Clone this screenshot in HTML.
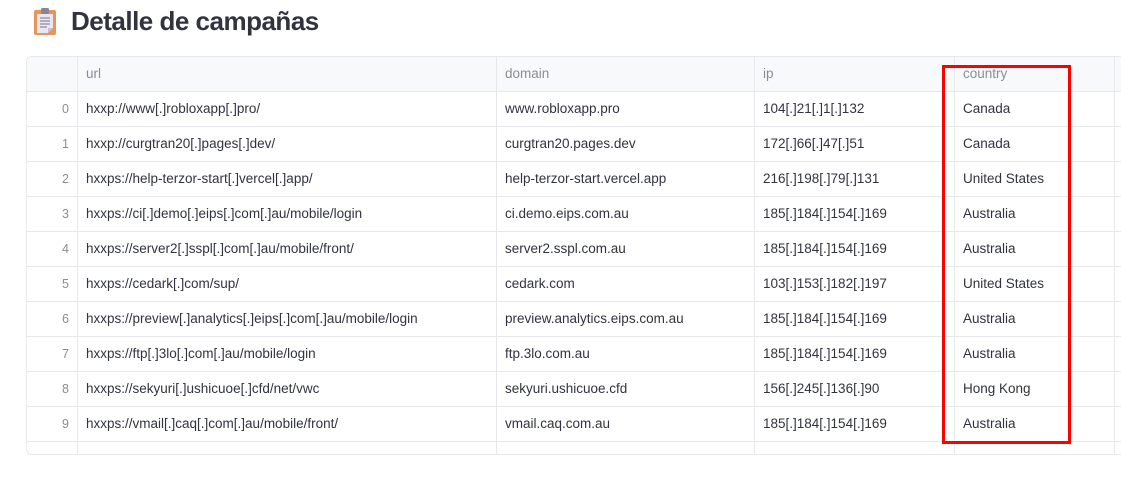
<!DOCTYPE html>
<html><head><meta charset="utf-8"><style>
*{margin:0;padding:0;box-sizing:border-box}
body{width:1121px;height:482px;background:#fff;font-family:"Liberation Sans",sans-serif;position:relative;overflow:hidden;color:#31333f}
h1{position:absolute;left:71px;top:6px;font-size:26px;font-weight:bold;color:#31333f;letter-spacing:-0.5px}
.tbl{position:absolute;left:26px;top:56px;width:1110px;height:399px;border:1px solid #e6e8ec;border-radius:6px;overflow:hidden}
.row{position:absolute;left:0;height:35px;width:100%;border-bottom:1px solid #e6e8ec;font-size:13.5px;color:#31333f}
.row.h{background:#f8f9fb;color:#8a8d98}
.c{position:absolute;top:0;height:35px;line-height:34px;border-right:1px solid #e6e8ec;padding-left:8px;white-space:nowrap;overflow:hidden}
.i{left:0;width:51px;text-align:right;padding-right:8px;padding-left:0;color:#8a8d98;font-size:12.5px}
.u{left:51px;width:419px}.d{left:470px;width:258px}.p{left:728px;width:200px}.k{left:928px;width:160px}
.red{position:absolute;left:942px;top:65px;width:129px;height:379px;border:3px solid #ff0000}
</style></head><body>
<svg style="position:absolute;left:33px;top:7px" width="24" height="29" viewBox="0 0 24 29">
<rect x="1" y="3" width="22" height="25" rx="2" fill="#e8955a"/>
<path d="M4 7h16v14l-5 5H4z" fill="#ece6f2"/>
<path d="M15 26l5-5h-5z" fill="#c9c0d4"/>
<rect x="8" y="1" width="8" height="6" rx="1.5" fill="#8a8594"/>
<g stroke="#8d8a99" stroke-width="1.2"><line x1="7" y1="11" x2="17" y2="11"/><line x1="7" y1="14" x2="17" y2="14"/><line x1="7" y1="17" x2="17" y2="17"/><line x1="7" y1="20" x2="14" y2="20"/></g>
</svg>
<h1>Detalle de campañas</h1>
<div class="tbl">
<div class="row h" style="top:0"><div class="c i"></div><div class="c u">url</div><div class="c d">domain</div><div class="c p">ip</div><div class="c k">country</div></div>
<div class="row" style="top:35px"><div class="c i">0</div><div class="c u">hxxp://www[.]robloxapp[.]pro/</div><div class="c d">www.robloxapp.pro</div><div class="c p">104[.]21[.]1[.]132</div><div class="c k">Canada</div></div>
<div class="row" style="top:70px"><div class="c i">1</div><div class="c u">hxxp://curgtran20[.]pages[.]dev/</div><div class="c d">curgtran20.pages.dev</div><div class="c p">172[.]66[.]47[.]51</div><div class="c k">Canada</div></div>
<div class="row" style="top:105px"><div class="c i">2</div><div class="c u">hxxps://help-terzor-start[.]vercel[.]app/</div><div class="c d">help-terzor-start.vercel.app</div><div class="c p">216[.]198[.]79[.]131</div><div class="c k">United States</div></div>
<div class="row" style="top:140px"><div class="c i">3</div><div class="c u">hxxps://ci[.]demo[.]eips[.]com[.]au/mobile/login</div><div class="c d">ci.demo.eips.com.au</div><div class="c p">185[.]184[.]154[.]169</div><div class="c k">Australia</div></div>
<div class="row" style="top:175px"><div class="c i">4</div><div class="c u">hxxps://server2[.]sspl[.]com[.]au/mobile/front/</div><div class="c d">server2.sspl.com.au</div><div class="c p">185[.]184[.]154[.]169</div><div class="c k">Australia</div></div>
<div class="row" style="top:210px"><div class="c i">5</div><div class="c u">hxxps://cedark[.]com/sup/</div><div class="c d">cedark.com</div><div class="c p">103[.]153[.]182[.]197</div><div class="c k">United States</div></div>
<div class="row" style="top:245px"><div class="c i">6</div><div class="c u">hxxps://preview[.]analytics[.]eips[.]com[.]au/mobile/login</div><div class="c d">preview.analytics.eips.com.au</div><div class="c p">185[.]184[.]154[.]169</div><div class="c k">Australia</div></div>
<div class="row" style="top:280px"><div class="c i">7</div><div class="c u">hxxps://ftp[.]3lo[.]com[.]au/mobile/login</div><div class="c d">ftp.3lo.com.au</div><div class="c p">185[.]184[.]154[.]169</div><div class="c k">Australia</div></div>
<div class="row" style="top:315px"><div class="c i">8</div><div class="c u">hxxps://sekyuri[.]ushicuoe[.]cfd/net/vwc</div><div class="c d">sekyuri.ushicuoe.cfd</div><div class="c p">156[.]245[.]136[.]90</div><div class="c k">Hong Kong</div></div>
<div class="row" style="top:350px"><div class="c i">9</div><div class="c u">hxxps://vmail[.]caq[.]com[.]au/mobile/front/</div><div class="c d">vmail.caq.com.au</div><div class="c p">185[.]184[.]154[.]169</div><div class="c k">Australia</div></div>
<div class="row" style="top:385px;border:none"><div class="c i" style="line-height:40px">10</div><div class="c u" style="line-height:40px">hxxps://xxxxx[.]xxx/</div><div class="c d"></div><div class="c p" style="line-height:40px">185[.]184[.]154[.]169</div><div class="c k" style="line-height:40px;color:#ccc">Australia</div></div>
</div>
<div class="red"></div>
</body></html>
